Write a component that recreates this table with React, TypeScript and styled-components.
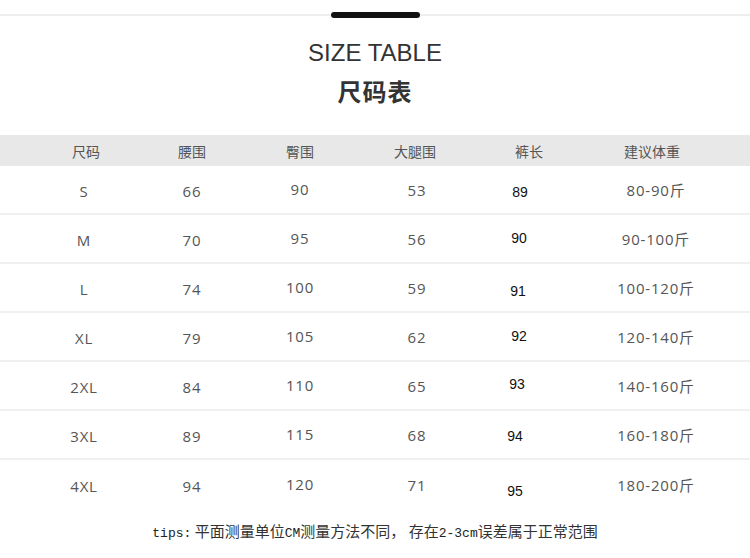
import React from "react";
import styled, { createGlobalStyle } from "styled-components";

const Global = createGlobalStyle`
  html, body { margin: 0; padding: 0; background: #fff; }
  body { width: 750px; height: 558px; overflow: hidden; font-family: "Open Sans", "Noto Sans CJK SC", sans-serif; }
`;

const Page = styled.div`
  width: 750px;
  height: 558px;
  display: flex;
  flex-direction: column;
  align-items: stretch;
`;

const TopBar = styled.div`
  height: 30px;
  display: flex;
  align-items: center;
  justify-content: center;
  background: linear-gradient(
    to bottom,
    transparent 14px,
    #eeeeee 14px,
    #eeeeee 16px,
    transparent 16px
  );
`;

const Handle = styled.div`
  width: 89px;
  height: 6px;
  border-radius: 3px;
  background: #111;
`;

const Title = styled.div`
  margin-top: 8px;
  line-height: 30px;
  text-align: center;
  font-family: "Liberation Sans", Arial, sans-serif;
  font-size: 24px;
  color: #333;
`;

const SubTitle = styled.div`
  margin-top: 8px;
  line-height: 30px;
  text-align: center;
  font-family: "Noto Sans CJK SC", sans-serif;
  font-size: 24px;
  font-weight: 700;
  letter-spacing: 1px;
  color: #333;
`;

const Table = styled.div`
  margin-top: 29px;
  display: flex;
  flex-direction: column;
`;

const cols = "112px 100px 116px 114px 114px 132px";

const HeaderRow = styled.div`
  height: 31px;
  background: #e8e8e8;
  display: grid;
  grid-template-columns: ${cols};
  padding-left: 30px;
  align-items: center;
`;

const HeadCell = styled.div`
  text-align: center;
  font-family: "Noto Sans CJK SC", sans-serif;
  font-size: 14px;
  color: #555;
  padding-top: 1px;
`;

const Row = styled.div<{ $last?: boolean }>`
  box-sizing: border-box;
  height: 49px;
  display: grid;
  grid-template-columns: ${cols};
  padding-left: 30px;
  align-items: center;
  border-bottom: ${(p) => (p.$last ? "none" : "2px solid #f0f0f0")};
`;

const Cell = styled.div<{ $dy?: number; $dx?: number }>`
  text-align: center;
  font-family: "Open Sans", "Noto Sans CJK SC", sans-serif;
  font-size: 15px;
  letter-spacing: 0.8px;
  color: #555;
  transform: translate(${(p) => p.$dx ?? 0}px, ${(p) => p.$dy ?? 0}px);
`;

const LengthCell = styled.div<{ $dy: number; $dx: number }>`
  text-align: center;
  font-family: "Liberation Sans", Arial, sans-serif;
  font-size: 14px;
  color: #111;
  transform: translate(${(p) => p.$dx}px, ${(p) => p.$dy}px);
`;

const Tips = styled.div`
  margin-top: 12px;
  line-height: 20px;
  text-align: center;
  font-family: "Noto Sans CJK SC", sans-serif;
  font-size: 15px;
  color: #333;
`;

const Mono = styled.span`
  font-family: "Liberation Mono", monospace;
  font-size: 13px;
  color: #222;
`;

type R = {
  size: string;
  waist: string;
  hip: string;
  thigh: string;
  len: string;
  weight: string;
  ldy: number;
  ldx: number;
};

const rows: R[] = [
  { size: "S", waist: "66", hip: "90", thigh: "53", len: "89", weight: "80-90斤", ldy: 2, ldx: -9 },
  { size: "M", waist: "70", hip: "95", thigh: "56", len: "90", weight: "90-100斤", ldy: -1, ldx: -10 },
  { size: "L", waist: "74", hip: "100", thigh: "59", len: "91", weight: "100-120斤", ldy: 3, ldx: -11 },
  { size: "XL", waist: "79", hip: "105", thigh: "62", len: "92", weight: "120-140斤", ldy: -1, ldx: -10 },
  { size: "2XL", waist: "84", hip: "110", thigh: "65", len: "93", weight: "140-160斤", ldy: -2, ldx: -12 },
  { size: "3XL", waist: "89", hip: "115", thigh: "68", len: "94", weight: "160-180斤", ldy: 1, ldx: -14 },
  { size: "4XL", waist: "94", hip: "120", thigh: "71", len: "95", weight: "180-200斤", ldy: 6, ldx: -14 },
];

const headers = ["尺码", "腰围", "臀围", "大腿围", "裤长", "建议体重"];

export default function App() {
  return (
    <Page>
      <Global />
      <TopBar>
        <Handle />
      </TopBar>
      <Title>SIZE TABLE</Title>
      <SubTitle>尺码表</SubTitle>
      <Table>
        <HeaderRow>
          {headers.map((h) => (
            <HeadCell key={h}>{h}</HeadCell>
          ))}
        </HeaderRow>
        {rows.map((r, i) => (
          <Row key={r.size} $last={i === rows.length - 1}>
            <Cell $dx={-2} $dy={1}>{r.size}</Cell>
            <Cell $dy={1}>{r.waist}</Cell>
            <Cell $dy={-1}>{r.hip}</Cell>
            <Cell $dx={2} $dy={0}>{r.thigh}</Cell>
            <LengthCell $dy={r.ldy} $dx={r.ldx}>{r.len}</LengthCell>
            <Cell $dx={4} $dy={0}>{r.weight}</Cell>
          </Row>
        ))}
      </Table>
      <Tips>
        <Mono>tips:</Mono> 平面测量单位<Mono>CM</Mono>测量方法不同， 存在<Mono>2-3cm</Mono>误差属于正常范围
      </Tips>
    </Page>
  );
}
